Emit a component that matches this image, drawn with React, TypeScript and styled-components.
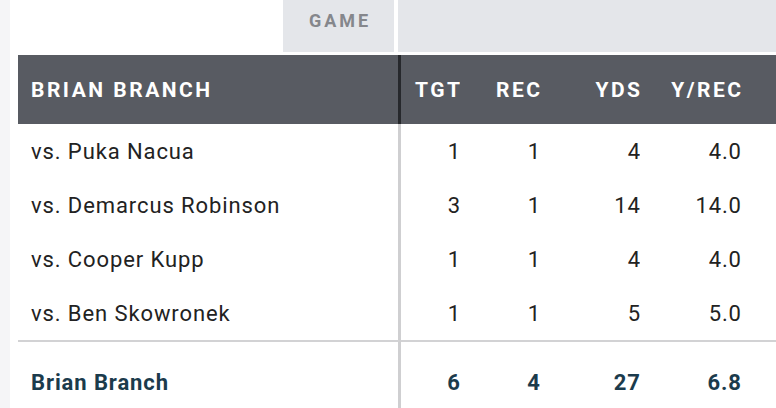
import React from 'react';
import styled, { createGlobalStyle } from 'styled-components';

const GlobalStyle = createGlobalStyle`
  html, body {
    margin: 0;
    padding: 0;
    background: #f5f5f7;
    font-family: Roboto, 'Liberation Sans', Arial, sans-serif;
  }
`;

const Page = styled.div`
  margin-left: 10px;
  width: 766px;
  height: 408px;
  overflow: hidden;
  background: #ffffff;
`;

const TopBar = styled.div`
  display: flex;
  height: 52px;
  margin-bottom: 3px;
`;

const TopSpacer = styled.div`
  width: 273px;
`;

const Tab = styled.div`
  width: 111px;
  background: #e4e6ea;
  display: flex;
  justify-content: center;
  align-items: flex-start;
  padding: 10px 0 0 3px;
  box-sizing: border-box;
  color: #85878c;
  font-size: 18px;
  font-weight: 700;
  letter-spacing: 3px;
`;

const TopFill = styled.div`
  flex: 1;
  margin-left: 4px;
  background: #e4e6ea;
`;

const Table = styled.div`
  margin-left: 8px;
  display: grid;
  grid-template-columns: 383px 59px 80px 100px 101px 1fr;
`;

type Kind = 'head' | 'body' | 'total';

const spacing = { head: 2.5, body: 0.9, total: 0.9 };

const Row = styled.div<{ $kind: Kind }>`
  display: contents;

  & > div {
    height: ${p => (p.$kind === 'head' ? 69 : p.$kind === 'total' ? 80 : 54)}px;
    padding-top: ${p => (p.$kind === 'total' ? 3 : 0)}px;
    box-sizing: border-box;
    background: ${p => (p.$kind === 'head' ? '#585b62' : '#ffffff')};
    color: ${p =>
      p.$kind === 'head' ? '#ffffff' : p.$kind === 'total' ? '#1b3b4c' : '#222222'};
    font-weight: ${p => (p.$kind === 'body' ? 400 : 700)};
    font-size: ${p => (p.$kind === 'head' ? 21 : 22)}px;
    letter-spacing: ${p => spacing[p.$kind]}px;
    border-top: ${p => (p.$kind === 'total' ? '2px solid #d2d2d4' : 'none')};
  }
`;

const NameCell = styled.div<{ $head?: boolean }>`
  display: flex;
  align-items: center;
  padding-left: 13px;
  border-right: 3px solid ${p => (p.$head ? '#26282c' : '#cfcfd1')};
`;

const StatCell = styled.div<{ $trail: number }>`
  display: flex;
  align-items: center;
  justify-content: flex-end;
  margin-right: -${p => p.$trail}px;
`;

const Filler = styled.div``;

type Line = { name: string; tgt: string; rec: string; yds: string; ypr: string };

const rows: Line[] = [
  { name: 'vs. Puka Nacua', tgt: '1', rec: '1', yds: '4', ypr: '4.0' },
  { name: 'vs. Demarcus Robinson', tgt: '3', rec: '1', yds: '14', ypr: '14.0' },
  { name: 'vs. Cooper Kupp', tgt: '1', rec: '1', yds: '4', ypr: '4.0' },
  { name: 'vs. Ben Skowronek', tgt: '1', rec: '1', yds: '5', ypr: '5.0' },
];

const total: Line = { name: 'Brian Branch', tgt: '6', rec: '4', yds: '27', ypr: '6.8' };

const StatRow = ({ line, kind }: { line: Line; kind: Kind }) => (
  <Row $kind={kind}>
    <NameCell $head={kind === 'head'}>{line.name}</NameCell>
    <StatCell $trail={spacing[kind]}>{line.tgt}</StatCell>
    <StatCell $trail={spacing[kind]}>{line.rec}</StatCell>
    <StatCell $trail={spacing[kind]}>{line.yds}</StatCell>
    <StatCell $trail={spacing[kind]}>{line.ypr}</StatCell>
    <Filler />
  </Row>
);

const App = (): JSX.Element => (
  <>
    <GlobalStyle />
    <Page>
      <TopBar>
        <TopSpacer />
        <Tab>GAME</Tab>
        <TopFill />
      </TopBar>
      <Table>
        <StatRow
          kind="head"
          line={{ name: 'BRIAN BRANCH', tgt: 'TGT', rec: 'REC', yds: 'YDS', ypr: 'Y/REC' }}
        />
        {rows.map(r => (
          <StatRow key={r.name} kind="body" line={r} />
        ))}
        <StatRow kind="total" line={total} />
      </Table>
    </Page>
  </>
);

export default App;
